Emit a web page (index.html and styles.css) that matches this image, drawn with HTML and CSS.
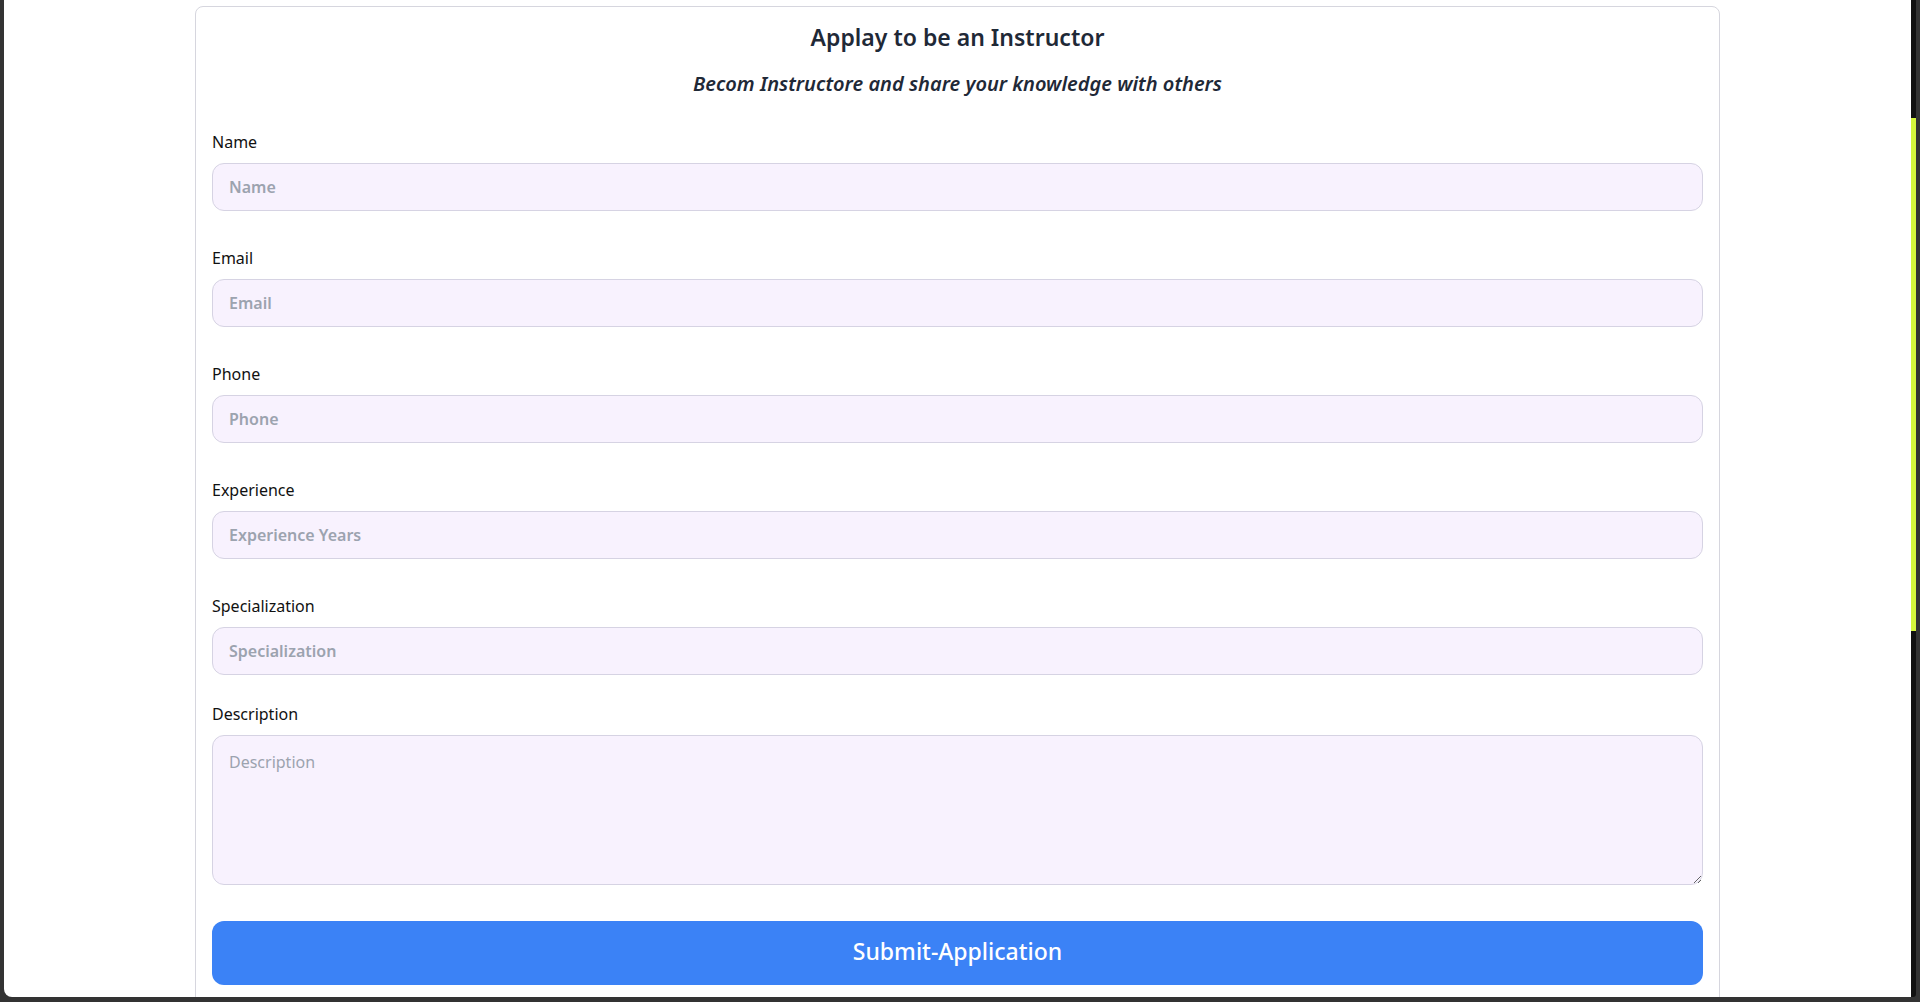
FILE: index.html
```html
<!DOCTYPE html>
<html lang="en">
<head>
<meta charset="utf-8">
<title>Apply to be an Instructor</title>
<link rel="stylesheet" href="styles.css">
</head>
<body>
<div class="frame">
  <div class="page">
    <section class="card">
      <h1 class="title">Applay to be an Instructor</h1>
      <p class="subtitle">Becom Instructore and share your knowledge with others</p>
      <form class="form">
        <div class="field">
          <label class="label" for="name">Name</label>
          <input class="input" id="name" type="text" placeholder="Name">
        </div>
        <div class="field">
          <label class="label" for="email">Email</label>
          <input class="input" id="email" type="email" placeholder="Email">
        </div>
        <div class="field">
          <label class="label" for="phone">Phone</label>
          <input class="input" id="phone" type="text" placeholder="Phone">
        </div>
        <div class="field">
          <label class="label" for="exp">Experience</label>
          <input class="input" id="exp" type="text" placeholder="Experience Years">
        </div>
        <div class="field field-tight">
          <label class="label" for="spec">Specialization</label>
          <input class="input" id="spec" type="text" placeholder="Specialization">
        </div>
        <div class="field">
          <label class="label" for="desc">Description</label>
          <textarea class="textarea" id="desc" placeholder="Description"></textarea>
        </div>
        <button class="submit" type="button">Submit-Application</button>
      </form>
    </section>
  </div>
  <div class="scrollbar"><div class="thumb"></div></div>
</div>
</body>
</html>
```
FILE: styles.css
```css
html, body {
  margin: 0;
  padding: 0;
  height: 1002px;
  overflow: hidden;
  background: #333333;
}
body {
  font-family: "Noto Sans", "Open Sans", sans-serif;
}
.frame {
  display: flex;
  height: 997px;
  padding: 0 4px;
}
.page {
  flex: 1;
  background: #ffffff;
  border-bottom-left-radius: 8px;
  overflow: hidden;
}
.scrollbar {
  width: 5px;
  background: #111111;
  border-bottom-right-radius: 3px;
}
.thumb {
  margin-top: 118px;
  height: 513px;
  background: #d4f53c;
}
.card {
  box-sizing: border-box;
  width: 1525px;
  margin: 6px auto 0;
  border: 1px solid #d6d6de;
  border-radius: 8px;
  padding: 14px 16px 40px;
}
.title {
  margin: 0;
  text-align: center;
  font-size: 23px;
  line-height: 32px;
  font-weight: 600;
  color: #1f2937;
}
.subtitle {
  margin: 17px 0 0;
  text-align: center;
  font-size: 20px;
  line-height: 28px;
  font-style: italic;
  font-weight: 600;
  color: #1f2937;
}
.form {
  display: flex;
  flex-direction: column;
  margin-top: 32px;
}
.field {
  display: flex;
  flex-direction: column;
  margin-bottom: 35px;
}
.field-tight {
  margin-bottom: 27px;
}
.label {
  font-size: 16px;
  line-height: 24px;
  color: #111111;
  margin-bottom: 9px;
}
.input, .textarea {
  box-sizing: border-box;
  width: 100%;
  border: 1px solid #d6d3e3;
  background: #f8f2fe;
  border-radius: 12px;
  font-family: inherit;
  font-size: 16px;
  color: #111111;
  outline: none;
}
.input {
  height: 48px;
  padding: 0 16px;
}
.input::placeholder {
  color: #9ca3af;
  font-weight: 600;
}
.textarea {
  height: 150px;
  padding: 14px 16px;
  line-height: 24px;
  resize: vertical;
}
.textarea::placeholder {
  color: #9ca3af;
  font-weight: 400;
}
.field:last-of-type {
  margin-bottom: 36px;
}
.submit {
  height: 64px;
  width: 100%;
  border: none;
  border-radius: 12px;
  background: #3b82f6;
  color: #ffffff;
  font-family: inherit;
  font-size: 23px;
  font-weight: 500;
  padding: 0 0 4px;
  cursor: pointer;
}
```
